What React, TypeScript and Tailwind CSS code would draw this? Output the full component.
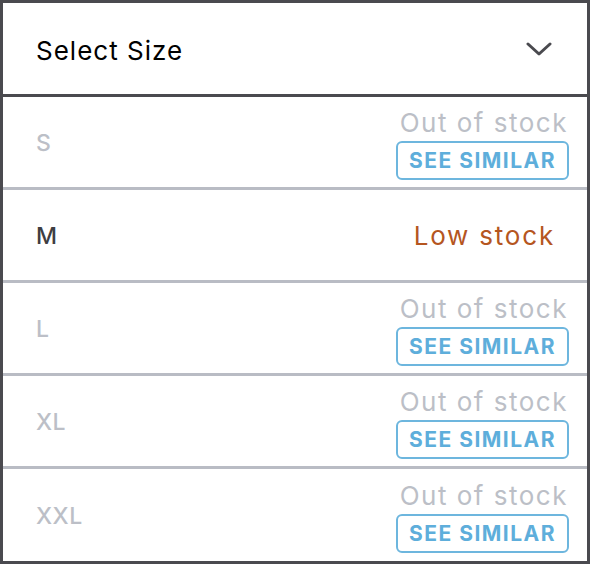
import React from "react";

const sizes = [
  { label: "S", status: "out" },
  { label: "M", status: "low" },
  { label: "L", status: "out" },
  { label: "XL", status: "out" },
  { label: "XXL", status: "out" },
];

export default function App() {
  return (
    <div className="w-[590px] h-[566px] bg-white" style={{ fontFamily: "Inter, 'Open Sans', sans-serif" }}>
      <div className="w-[590px] border-[3px] border-[#4a4a4f] bg-white">
        <div className="h-[94px] flex items-center justify-between pl-[33px] pr-[35px] border-b-[3px] border-[#4a4a4f]">
          <span className="text-[26px] text-black tracking-[1px] mt-[3px]">Select Size</span>
          <svg width="26" height="16" viewBox="0 0 26 16" fill="none" className="mt-[1px]">
            <polyline points="2,3 13,13 24,3" stroke="#4a4a4f" strokeWidth="3" strokeLinecap="round" strokeLinejoin="round" />
          </svg>
        </div>
        {sizes.map((s, i) => (
          <div
            key={s.label}
            className={`flex items-center justify-between pl-[33px] ${i < sizes.length - 1 ? "h-[93px] border-b-[3px] border-[#b9bcc4]" : "h-[92px]"} ${s.status === "low" ? "pr-[32px]" : "pr-[18px]"}`}
          >
            <span className={`text-[23px] font-medium tracking-[0.5px] mt-[3px] ${s.status === "low" ? "text-[#3e3e42]" : "text-[#bcbfc7]"}`}>{s.label}</span>
            {s.status === "low" ? (
              <span className="text-[26px] text-[#b5561f] tracking-[1.8px]">Low stock</span>
            ) : (
              <div className="flex flex-col items-end mt-[4px]">
                <span className="text-[26px] leading-[30px] text-[#bcbfc7] tracking-[1.5px] mr-[1px]">Out of stock</span>
                <button className="mt-[3px] h-[39px] w-[173px] rounded-[6px] border-2 border-[#6db6de] text-[21px] font-bold tracking-[1.5px] text-[#5eaedb]">
                  SEE SIMILAR
                </button>
              </div>
            )}
          </div>
        ))}
      </div>
    </div>
  );
}
